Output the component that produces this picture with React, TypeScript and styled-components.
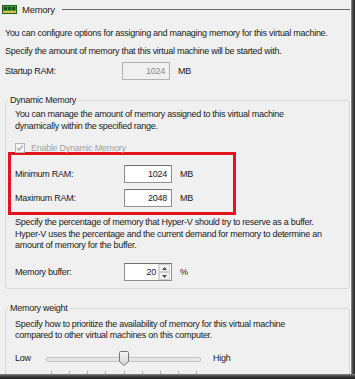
import React, {FC} from 'react';
import styled, {createGlobalStyle} from 'styled-components';

const GlobalStyle = createGlobalStyle`
  html, body {
    margin: 0;
    padding: 0;
    background: #f0f0f0;
  }
  body {
    font-family: "Liberation Sans", Arial, sans-serif;
    font-size: 9px;
    letter-spacing: -0.28px;
    color: #1a1a1a;
  }
`;

const Frame = styled.div`
  display: grid;
  grid-template-columns: 351px 4px;
  grid-template-rows: 374px 5px;
  width: 355px;
  height: 379px;
  background: #2a2a2a;
`;

const RightShade = styled.div`
  background: linear-gradient(to right, #9a9a9a, #4a4a4a 40%, #262626);
`;

const BottomShade = styled.div`
  grid-column: 1 / span 2;
  background: linear-gradient(to bottom, #8a8a8a, #444 40%, #1e1e1e);
`;

const Panel = styled.div`
  background: #f0f0f0;
  overflow: hidden;
  border-right: 1px solid #fafafa;
  box-sizing: border-box;
  padding: 0 0 0 5px;
`;

const Header = styled.div`
  display: flex;
  align-items: center;
  height: 18px;
  margin-left: -3px;
  gap: 5px;
`;

const HeaderTitle = styled.span`
  font-size: 9.5px;
`;

const HeaderLine = styled.div`
  flex: 1;
  height: 1px;
  background: #6a6a6a;
  margin-left: 2px;
`;

const Para = styled.p<{$top?: number; $lh?: number}>`
  margin: ${(p) => p.$top ?? 0}px 0 0;
  line-height: ${(p) => p.$lh ?? 12}px;
  white-space: nowrap;
`;

const FieldRow = styled.div<{$top?: number; $labelW?: number}>`
  display: flex;
  align-items: center;
  height: 18px;
  margin-top: ${(p) => p.$top ?? 0}px;
  .label {
    width: ${(p) => p.$labelW ?? 109}px;
  }
  .unit {
    margin-left: 8px;
  }
`;

const NumBox = styled.div<{$disabled?: boolean}>`
  position: relative;
  box-sizing: border-box;
  width: 48px;
  height: 18px;
  border: 1px solid ${(p) => (p.$disabled ? '#b4b4b4' : '#8e8f8f')};
  border-top-color: ${(p) => (p.$disabled ? '#b4b4b4' : '#6f6f6f')};
  background: ${(p) => (p.$disabled ? '#f0f0f0' : '#fff')};
  color: ${(p) => (p.$disabled ? '#8d8d8d' : '#1a1a1a')};
  display: flex;
  align-items: center;
  justify-content: flex-end;
  padding-right: 4px;
`;

const Spinner = styled.div`
  display: flex;
  flex-direction: column;
  width: 11px;
  height: 16px;
  margin-left: 2px;
  margin-right: -3px;
  border-left: 1px solid #dcdcdc;
  div {
    flex: 1;
    display: flex;
    align-items: center;
    justify-content: center;
    background: #f4f4f4;
    border: 1px solid #cfcfcf;
  }
`;

const Group = styled.fieldset<{$top: number; $pb?: number}>`
  margin: ${(p) => p.$top}px 0 0 0;
  width: 345px;
  box-sizing: border-box;
  border: 1px solid #d5d9dc;
  border-radius: 3px;
  padding: 0 0 ${(p) => p.$pb ?? 0}px 9px;
  legend {
    padding: 0 2px;
    margin-left: -7px;
    line-height: 12px;
  }
`;

const CheckRow = styled.div`
  display: flex;
  align-items: center;
  gap: 6px;
  height: 10px;
  margin-top: 10px;
  color: #a3a3a3;
`;

const RedBox = styled.div`
  box-sizing: border-box;
  width: 228px;
  margin: -1px 0 0 -7px;
  border: 3px solid #e4141c;
  padding: 10px 0 5px 4px;
`;

const SliderRow = styled.div`
  display: flex;
  align-items: flex-start;
  margin-top: 10px;
  height: 22px;
  .low {
    width: 31px;
    line-height: 14px;
  }
  .high {
    margin-left: 12px;
    line-height: 14px;
  }
`;

const Slider = styled.div`
  position: relative;
  width: 155px;
  height: 22px;
`;

const Track = styled.div`
  margin-top: 6px;
  height: 3px;
  border: 1px solid #c4c4c4;
  border-radius: 2px;
  background: #e6e6e6;
`;

const Ticks = styled.div`
  display: flex;
  justify-content: space-between;
  padding: 0 4px 0 5px;
  margin-top: 9px;
  span {
    width: 1px;
    height: 3px;
    background: #b0b0b0;
  }
`;

const Thumb = styled.svg`
  position: absolute;
  left: 73px;
  top: 0;
`;

const MemoryIcon: FC = () => (
  <svg width="15" height="9" viewBox="0 0 15 9">
    <rect x="0.5" y="0.5" width="14" height="8" fill="#3f9a3c" stroke="#1f5e1d" />
    <rect x="2" y="2" width="3" height="3" fill="#1d4f1a" />
    <rect x="6" y="2" width="3" height="3" fill="#1d4f1a" />
    <rect x="10" y="2" width="3" height="3" fill="#1d4f1a" />
    <rect x="1" y="6" width="13" height="2" fill="#d8c24a" />
  </svg>
);

const CheckIcon: FC = () => (
  <svg width="10" height="10" viewBox="0 0 10 10">
    <rect x="0.5" y="0.5" width="9" height="9" fill="#f4f4f4" stroke="#b5b5b5" />
    <path d="M2.2 5 L4 7 L7.8 2.6" fill="none" stroke="#a8a8a8" strokeWidth="1.4" />
  </svg>
);

const Up: FC = () => (
  <svg width="5" height="3" viewBox="0 0 5 3">
    <path d="M0 3 L2.5 0 L5 3 Z" fill="#4a4a4a" />
  </svg>
);

const Down: FC = () => (
  <svg width="5" height="3" viewBox="0 0 5 3">
    <path d="M0 0 L2.5 3 L5 0 Z" fill="#4a4a4a" />
  </svg>
);

const App: FC = () => {
  const ticks = Array.from({length: 9});
  return (
    <Frame>
      <GlobalStyle />
      <Panel>
        <Header>
          <MemoryIcon />
          <HeaderTitle>Memory</HeaderTitle>
          <HeaderLine />
        </Header>
        <Para $top={9}>You can configure options for assigning and managing memory for this virtual machine.</Para>
        <Para $top={5.5}>Specify the amount of memory that this virtual machine will be started with.</Para>
        <FieldRow $top={5.5} $labelW={117}>
          <span className="label">Startup RAM:</span>
          <NumBox $disabled>1024</NumBox>
          <span className="unit">MB</span>
        </FieldRow>

        <Group $top={14} $pb={7}>
          <legend>Dynamic Memory</legend>
          <Para $top={2} $lh={12.4}>
            You can manage the amount of memory assigned to this virtual machine
            <br />
            dynamically within the specified range.
          </Para>
          <CheckRow>
            <CheckIcon />
            <span>Enable Dynamic Memory</span>
          </CheckRow>
          <RedBox>
            <FieldRow>
              <span className="label">Minimum RAM:</span>
              <NumBox>1024</NumBox>
              <span className="unit">MB</span>
            </FieldRow>
            <FieldRow $top={6}>
              <span className="label">Maximum RAM:</span>
              <NumBox>2048</NumBox>
              <span className="unit">MB</span>
            </FieldRow>
          </RedBox>
          <Para $top={2.5} $lh={11.3}>
            Specify the percentage of memory that Hyper-V should try to reserve as a buffer.
            <br />
            Hyper-V uses the percentage and the current demand for memory to determine an
            <br />
            amount of memory for the buffer.
          </Para>
          <FieldRow $top={12}>
            <span className="label">Memory buffer:</span>
            <NumBox>
              20
              <Spinner>
                <div>
                  <Up />
                </div>
                <div>
                  <Down />
                </div>
              </Spinner>
            </NumBox>
            <span className="unit">%</span>
          </FieldRow>
        </Group>

        <Group $top={13} $pb={20}>
          <legend>Memory weight</legend>
          <Para $top={4.5} $lh={11}>
            Specify how to prioritize the availability of memory for this virtual machine
            <br />
            compared to other virtual machines on this computer.
          </Para>
          <SliderRow>
            <span className="low">Low</span>
            <Slider>
              <Track />
              <Ticks>
                {ticks.map((_, i) => (
                  <span key={i} />
                ))}
              </Ticks>
              <Thumb width="10" height="15" viewBox="0 0 10 15">
                <defs>
                  <linearGradient id="thumbFill" x1="0" x2="0" y1="0" y2="1">
                    <stop offset="0" stopColor="#f6f6f6" />
                    <stop offset="1" stopColor="#d4d4d4" />
                  </linearGradient>
                </defs>
                <path
                  d="M0.5 1.5 Q0.5 0.5 1.5 0.5 L8.5 0.5 Q9.5 0.5 9.5 1.5 L9.5 10.5 L5 14.5 L0.5 10.5 Z"
                  fill="url(#thumbFill)"
                  stroke="#777"
                />
              </Thumb>
            </Slider>
            <span className="high">High</span>
          </SliderRow>
        </Group>
      </Panel>
      <RightShade />
      <BottomShade />
    </Frame>
  );
};

export default App;
